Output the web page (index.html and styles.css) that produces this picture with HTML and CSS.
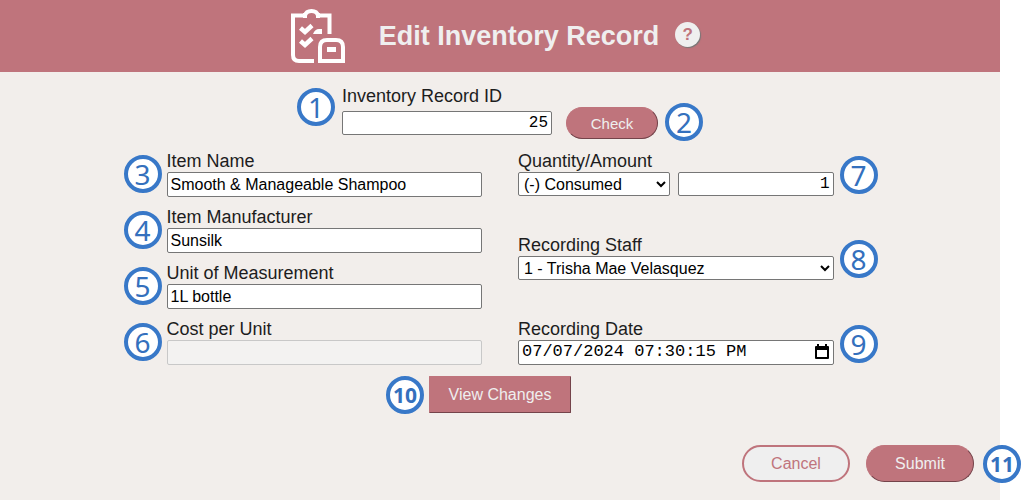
FILE: index.html
```html
<!DOCTYPE html>
<html lang="en">
<head>
<meta charset="utf-8">
<title>Edit Inventory Record</title>
<link rel="stylesheet" href="styles.css">
</head>
<body>
<div class="panel">
  <header class="header">
    <svg class="header-icon" viewBox="0 0 54 54" fill="none" stroke="#fff" stroke-width="4" aria-hidden="true">
      <path d="M23 52H8Q2 52 2 46V6.500H14Q15 2 20.500 2Q26 2 27 6.500H38.500V25"/>
      <path d="M12 4H16V9H12ZM25 4H29V9H25Z" fill="#fff" stroke="none"/>
      <path d="M9.500 19L14 23L21 16.500M9.500 32L14 36L21 29.500" stroke-width="4.500"/>
      <path d="M22 25Q24 20 28 20H31V25Z" fill="#fff" stroke="none"/>
      <path d="M29 52V38Q29 31 36 31H45Q52 31 52 38V52Z"/>
      <path d="M36 40.500H45" stroke-width="5"/>
    </svg>
    <h1 class="title">Edit Inventory Record</h1>
    <button class="help" type="button" aria-label="Help">?</button>
  </header>
  <form class="form">
    <div class="lookup">
      <div class="field lookup-field">
        <label for="record-id">Inventory Record ID</label>
        <input class="control number" id="record-id" type="number" value="25">
        <span class="badge badge-lookup">1</span>
      </div>
      <div class="anchor">
        <button class="button pill small" type="button">Check</button>
        <span class="badge badge-right">2</span>
      </div>
    </div>
    <div class="columns">
      <div class="column">
        <div class="field">
          <label for="item">Item Name</label>
          <input class="control" id="item" type="text" value="Smooth &amp; Manageable Shampoo">
          <span class="badge badge-left">3</span>
        </div>
        <div class="field">
          <label for="maker">Item Manufacturer</label>
          <input class="control" id="maker" type="text" value="Sunsilk">
          <span class="badge badge-left">4</span>
        </div>
        <div class="field">
          <label for="unit">Unit of Measurement</label>
          <input class="control" id="unit" type="text" value="1L bottle">
          <span class="badge badge-left">5</span>
        </div>
        <div class="field">
          <label for="cost">Cost per Unit</label>
          <input class="control" id="cost" type="text" disabled>
          <span class="badge badge-left">6</span>
        </div>
      </div>
      <div class="column column-spread">
        <div class="field">
          <label for="quantity">Quantity/Amount</label>
          <div class="pair">
            <select class="control" aria-label="Change type"><option>(-) Consumed</option></select>
            <input class="control number" id="quantity" type="number" value="1">
          </div>
          <span class="badge badge-right">7</span>
        </div>
        <div class="field">
          <label for="staff">Recording Staff</label>
          <select class="control" id="staff"><option>1 - Trisha Mae Velasquez</option></select>
          <span class="badge badge-right">8</span>
        </div>
        <div class="field">
          <label for="date">Recording Date</label>
          <div class="anchor">
            <input class="control date" id="date" type="text" value="07/07/2024 07:30:15 PM">
            <button class="picker" type="button" aria-label="Choose date">
              <svg viewBox="0 0 14 16" aria-hidden="true">
                <path d="M2 0H4V2H10V0H12V2H13Q14 2 14 3V14Q14 15 13 15H1Q0 15 0 14V3Q0 2 1 2H2ZM2 6V13H12V6Z" fill="#000" fill-rule="evenodd"/>
              </svg>
            </button>
          </div>
          <span class="badge badge-right">9</span>
        </div>
      </div>
    </div>
    <div class="anchor changes">
      <button class="button wide" type="button">View Changes</button>
      <span class="badge badge-changes double">10</span>
    </div>
    <div class="actions">
      <button class="button pill outline" type="button">Cancel</button>
      <div class="anchor">
        <button class="button pill" type="submit">Submit</button>
        <span class="badge badge-submit double">11</span>
      </div>
    </div>
  </form>
</div>
</body>
</html>
```
FILE: styles.css
```css
* { box-sizing: border-box; }

body {
  margin: 0;
  padding-right: 31px;
  background: #fff;
  color: #1d1d1d;
  font: 18px/21px "Liberation Sans", Arial, sans-serif;
}

.panel {
  display: flex;
  flex-direction: column;
  min-height: 100vh;
  background: #f2eeeb;
}

.header {
  display: flex;
  align-items: center;
  justify-content: center;
  min-height: 72px;
  padding-right: 9px;
  background: #bf747c;
}

.header-icon { width: 54px; height: 54px; }

.title {
  margin: 0 16px 0 34px;
  color: #efefef;
  font-size: 27px;
  line-height: 32px;
}

.help {
  width: 25px;
  height: 25px;
  margin-bottom: 4px;
  padding: 0;
  border: 0;
  border-radius: 50%;
  background: #efefef;
  box-shadow: 1px 1px 1px #777;
  color: #bf747c;
  font: bold 17px/25px "Liberation Sans", Arial, sans-serif;
}

.form {
  display: flex;
  flex: 1;
  flex-direction: column;
  align-items: center;
  padding: 14px 26px 18px;
}

.lookup {
  display: flex;
  align-items: flex-end;
  gap: 14px;
  margin-bottom: 12px;
}

.anchor { position: relative; display: flex; }

.field {
  position: relative;
  display: flex;
  flex-direction: column;
}

.lookup-field { width: 210px; gap: 4px; margin-bottom: 4px; }

.columns {
  display: grid;
  grid-template-columns: 1fr 1fr;
  gap: 36px;
  width: 100%;
  max-width: 667px;
}

.column {
  display: flex;
  flex-direction: column;
  gap: 10px;
  min-width: 0;
}

.column-spread { justify-content: space-between; }

.control {
  width: 100%;
  height: 25px;
  margin: 0;
  padding: 1px 3px;
  border: 1px solid #767676;
  border-radius: 2px;
  background-color: #fff;
  color: #000;
  font: 16px "Liberation Sans", Arial, sans-serif;
}

select.control { height: 24px; padding: 0 1px; }

.control:disabled { border-color: #c8c8c8; background: #f3f2f1; }

.number {
  height: 24px;
  appearance: textfield;
  font-family: "Liberation Mono", "Courier New", monospace;
  text-align: right;
}

.number::-webkit-inner-spin-button { display: none; }

.date {
  padding-bottom: 3px;
  font: 17px "Liberation Mono", "Courier New", monospace;
}

.picker {
  position: absolute;
  top: 4px;
  right: 4px;
  width: 16px;
  height: 16px;
  padding: 0 1px;
  border: 0;
  background: none;
}

.picker svg { display: block; width: 14px; height: 16px; }

.pair {
  display: grid;
  grid-template-columns: 152px 1fr;
  gap: 8px;
}

.button {
  min-width: 108px;
  height: 37px;
  padding: 0 17px;
  border: 1px solid;
  border-color: #bf747c #74434a #74434a #bf747c;
  border-radius: 1px;
  background: #bf747c;
  color: #efefef;
  font: 16px "Liberation Sans", Arial, sans-serif;
}

.wide { min-width: 142px; }

.pill { border-radius: 19px; }

.small { min-width: 92px; height: 32px; font-size: 15px; }

.outline {
  border: 2px solid #bf747c;
  background: #efefef;
  color: #bf747c;
}

.changes { margin-top: 11px; }

.actions {
  display: flex;
  gap: 16px;
  align-self: flex-end;
  margin-top: auto;
}

.badge {
  position: absolute;
  display: flex;
  align-items: center;
  justify-content: center;
  width: 38px;
  height: 38px;
  border: 4px solid #3878c8;
  border-radius: 50%;
  background: #fff;
  color: #3470bd;
  font: 28px/30px "Noto Sans", sans-serif;
}

.double { font-size: 21px; font-weight: 700; }

.badge-lookup { top: 2px; right: calc(100% + 7px); }
.badge-left { top: 4px; right: calc(100% + 5px); }
.badge-right { bottom: 2px; left: calc(100% + 6px); }
.anchor .badge-right { bottom: -2px; left: calc(100% + 7px); }
.badge-changes { top: 0; right: calc(100% + 5px); }
.badge-submit { top: 0; left: calc(100% + 9px); }
```
